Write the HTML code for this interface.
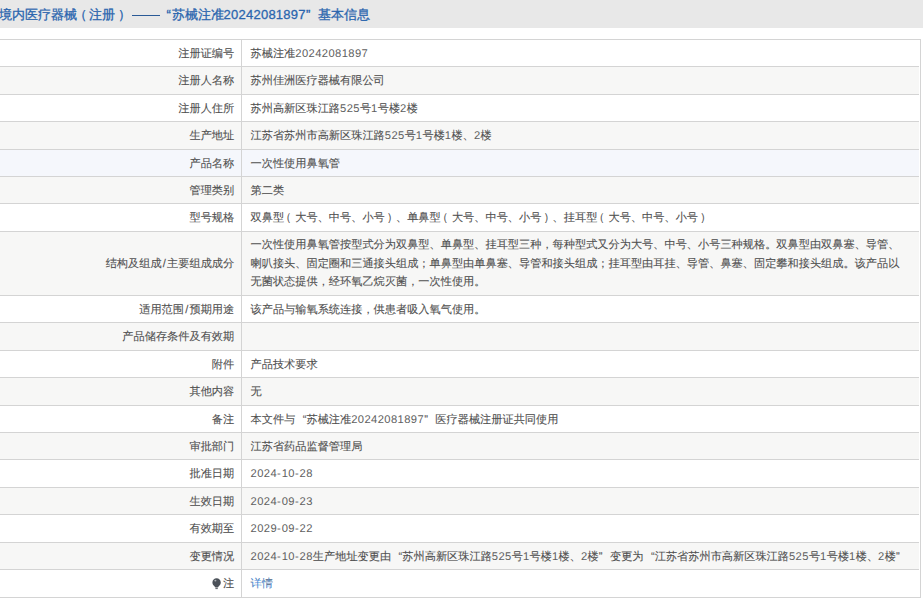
<!DOCTYPE html>
<html><head><meta charset="utf-8">
<style>
html,body{margin:0;padding:0;background:#fff;}
body{width:923px;height:604px;overflow:hidden;position:relative;font-family:"Liberation Sans",sans-serif;color:#333;}
.r .k,.r .v{color:#505050;-webkit-text-stroke:0.1px #505050;}
.tl{position:absolute;left:0;top:39px;width:921px;height:1px;background:#d4d4d4;}
.hd{position:absolute;left:0;top:0;width:923px;height:28px;background:#e8e8e8;}
.hd span.t{position:absolute;left:-1px;top:6px;font-size:13px;line-height:18px;color:#2a65ae;-webkit-text-stroke:0.3px #2a65ae;white-space:nowrap;}
.hd .q1,.hd .q2{width:13px;}
.q1,.q2{display:inline-block;width:11.2px;}
.q1{text-align:right;}
.q2{text-align:left;}
.r{position:absolute;left:-2px;width:921px;border-top:1px solid #d4d4d4;box-sizing:border-box;}
.r .k{position:absolute;left:0;width:236.2px;top:1px;bottom:0;text-align:right;font-size:11.2px;text-rendering:geometricPrecision;line-height:26px;white-space:nowrap;}
.r .v{position:absolute;left:252.5px;top:1px;bottom:0;font-size:11.2px;text-rendering:geometricPrecision;line-height:26px;white-space:nowrap;}
.d{letter-spacing:0.41px;-webkit-text-stroke:0;color:#606060;}
.h{letter-spacing:0.9px;}
.sl{margin:0 1.2px;}
.p1{position:relative;left:-3.8px;}
.p2{position:relative;left:2px;}
.tall .k{line-height:62px;}
.tall .v{line-height:18.6px;top:4px;}
.vl{position:absolute;left:241px;top:39px;width:1px;height:558px;background:#d4d4d4;}
.rl{position:absolute;left:920px;top:39px;width:1px;height:558px;background:#d4d4d4;}
.bl{position:absolute;left:0;top:597px;width:921px;height:1px;background:#d4d4d4;}
.lnk{color:#4a90e2;}
.bulb{position:absolute;left:213.5px;top:7.4px;}
</style></head><body>
<div class="hd"><span class="t" style="left:-1px">境内医疗器械</span><span class="t" style="left:74.4px">（</span><span class="t" style="left:88.5px">注册</span><span class="t" style="left:117.5px">）</span><div style="position:absolute;left:131.5px;top:15px;width:28.5px;height:1px;background:#2a5a96"></div><span class="t" style="left:166.5px">“</span><span class="t" style="left:171.5px">苏械注准<span style="letter-spacing:0.25px">20242081897</span></span><span class="t" style="left:306px">”</span><span class="t" style="left:317.5px">基本信息</span></div>
<div class="r" style="top:39px;height:27px;background:#ffffff"><div class="k">注册证编号</div><div class="v">苏械注准<span class="d">20242081897</span></div></div>
<div class="r" style="top:66px;height:28px;background:#f7f7f6"><div class="k">注册人名称</div><div class="v">苏州佳洲医疗器械有限公司</div></div>
<div class="r" style="top:94px;height:27px;background:#ffffff"><div class="k">注册人住所</div><div class="v">苏州高新区珠江路<span class="d">525</span>号<span class="d">1</span>号楼<span class="d">2</span>楼</div></div>
<div class="r" style="top:121px;height:28px;background:#f7f7f6"><div class="k">生产地址</div><div class="v">江苏省苏州市高新区珠江路<span class="d">525</span>号<span class="d">1</span>号楼<span class="d">1</span>楼、<span class="d">2</span>楼</div></div>
<div class="r" style="top:149px;height:27px;background:#f5f7fc"><div class="k">产品名称</div><div class="v">一次性使用鼻氧管</div></div>
<div class="r" style="top:176px;height:27px;background:#f7f7f6"><div class="k">管理类别</div><div class="v">第二类</div></div>
<div class="r" style="top:203px;height:28px;background:#ffffff"><div class="k">型号规格</div><div class="v">双鼻型<span class="p1">（</span>大号、中号、小号<span class="p2">）</span>、单鼻型<span class="p1">（</span>大号、中号、小号<span class="p2">）</span>、挂耳型<span class="p1">（</span>大号、中号、小号<span class="p2">）</span></div></div>
<div class="r tall" style="top:231px;height:64px;background:#f7f7f6"><div class="k">结构及组成<span class="sl">/</span>主要组成成分</div><div class="v">一次性使用鼻氧管按型式分为双鼻型、单鼻型、挂耳型三种，每种型式又分为大号、中号、小号三种规格。双鼻型由双鼻塞、导管、<br>喇叭接头、固定圈和三通接头组成；单鼻型由单鼻塞、导管和接头组成；挂耳型由耳挂、导管、鼻塞、固定攀和接头组成。该产品以<br>无菌状态提供，经环氧乙烷灭菌，一次性使用。</div></div>
<div class="r" style="top:295px;height:27px;background:#ffffff"><div class="k">适用范围<span class="sl">/</span>预期用途</div><div class="v">该产品与输氧系统连接，供患者吸入氧气使用。</div></div>
<div class="r" style="top:322px;height:28px;background:#f7f7f6"><div class="k">产品储存条件及有效期</div><div class="v"></div></div>
<div class="r" style="top:350px;height:27px;background:#ffffff"><div class="k">附件</div><div class="v">产品技术要求</div></div>
<div class="r" style="top:377px;height:28px;background:#f7f7f6"><div class="k">其他内容</div><div class="v">无</div></div>
<div class="r" style="top:405px;height:27px;background:#ffffff"><div class="k">备注</div><div class="v">本文件与<span class="q1">“</span>苏械注准<span class="d">20242081897</span><span class="q2">”</span>医疗器械注册证共同使用</div></div>
<div class="r" style="top:432px;height:27px;background:#f7f7f6"><div class="k">审批部门</div><div class="v">江苏省药品监督管理局</div></div>
<div class="r" style="top:459px;height:28px;background:#ffffff"><div class="k">批准日期</div><div class="v"><span class="d">2024<span class="h">-</span>10<span class="h">-</span>28</span></div></div>
<div class="r" style="top:487px;height:27px;background:#f7f7f6"><div class="k">生效日期</div><div class="v"><span class="d">2024<span class="h">-</span>09<span class="h">-</span>23</span></div></div>
<div class="r" style="top:514px;height:28px;background:#ffffff"><div class="k">有效期至</div><div class="v"><span class="d">2029<span class="h">-</span>09<span class="h">-</span>22</span></div></div>
<div class="r" style="top:542px;height:27px;background:#f7f7f6"><div class="k">变更情况</div><div class="v"><span class="d">2024<span class="h">-</span>10<span class="h">-</span>28</span>生产地址变更由<span class="q1">“</span>苏州高新区珠江路<span class="d">525</span>号<span class="d">1</span>号楼<span class="d">1</span>楼、<span class="d">2</span>楼<span class="q2">”</span>变更为<span class="q1">“</span>江苏省苏州市高新区珠江路<span class="d">525</span>号<span class="d">1</span>号楼<span class="d">1</span>楼、<span class="d">2</span>楼<span class="q2">”</span></div></div>
<div class="r" style="top:569px;height:28px;background:#ffffff"><div class="k"><svg class="bulb" width="10" height="12" viewBox="0 0 10 12"><path d="M4.6 0.3C2.3 0.3 0.4 2.1 0.4 4.4c0 1.5 0.8 2.5 1.6 3.3 0.5 0.5 0.9 0.9 1 1.5h3.2c0.1-0.6 0.5-1 1-1.5 0.8-0.8 1.6-1.8 1.6-3.3C8.8 2.1 6.9 0.3 4.6 0.3z" fill="#4b5159"/><rect x="3.4" y="9.5" width="2.4" height="1.6" fill="#6a6e74"/><ellipse cx="3.4" cy="2.6" rx="1" ry="0.9" fill="#fff" opacity="0.55"/></svg>注</div><div class="v"><span class="lnk">详情</span></div></div>
<div class="tl"></div><div class="vl"></div><div class="rl"></div><div class="bl"></div>
</body></html>
